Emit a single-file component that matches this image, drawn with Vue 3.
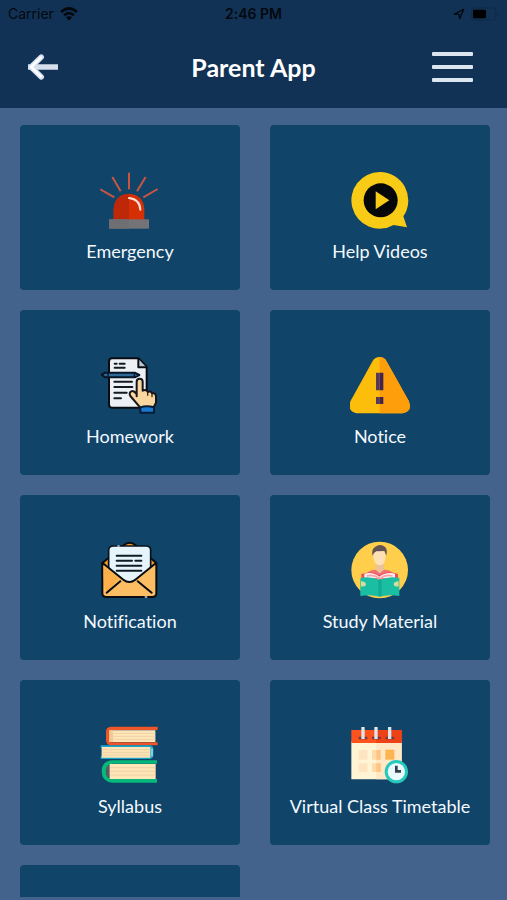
<script setup>
const tiles = [
  { id: 'emergency', label: 'Emergency' },
  { id: 'videos', label: 'Help Videos' },
  { id: 'homework', label: 'Homework' },
  { id: 'notice', label: 'Notice' },
  { id: 'notification', label: 'Notification' },
  { id: 'study', label: 'Study Material' },
  { id: 'syllabus', label: 'Syllabus' },
  { id: 'timetable', label: 'Virtual Class Timetable' }
]
</script>

<template>
  <div class="app">
    <header class="header">
      <div class="status">
        <div class="carrier">
          <span>Carrier</span>
          <svg class="wifi" viewBox="0 0 54 42" aria-hidden="true">
            <g fill="none" stroke="currentColor" stroke-width="8">
              <path d="M3 15Q27 -6 51 15" />
              <path d="M12 25Q27 12 42 25" />
            </g>
            <path d="M18 31Q27 24 36 31L27 41Z" fill="currentColor" />
          </svg>
        </div>
        <span class="time">2:46 PM</span>
        <div class="power">
          <svg class="location" viewBox="0 0 36 36" aria-hidden="true">
            <path d="M4 18L32 4L20 32L18 19Z" fill="none" stroke="currentColor" stroke-width="4" stroke-linejoin="round" />
          </svg>
          <svg class="battery" viewBox="0 0 84 42" aria-hidden="true">
            <rect x="2" y="3" width="72" height="36" rx="8" fill="none" stroke="#0c2b49" stroke-width="3" />
            <rect x="6" y="8" width="39" height="26" rx="4" fill="#000" />
            <path d="M78 14Q84 21 78 28Z" fill="#0c2b49" />
          </svg>
        </div>
      </div>
      <div class="bar">
        <button class="icon-button" type="button" aria-label="Back">
          <svg class="back" viewBox="0 0 90 78" aria-hidden="true">
            <path d="M6 39H87" fill="none" stroke="#d5dfed" stroke-width="17" stroke-linecap="square" />
            <path d="M40 9L9 39L40 69" fill="none" stroke="#d5e1f2" stroke-width="16" stroke-linecap="round" stroke-linejoin="round" />
            <path d="M38 11L10 39L38 67" fill="none" stroke="#fff" stroke-width="8" stroke-linecap="round" stroke-linejoin="round" />
          </svg>
        </button>
        <h1>Parent App</h1>
        <button class="icon-button menu-button" type="button" aria-label="Menu">
          <span class="menu"><i></i><i></i><i></i></span>
        </button>
      </div>
    </header>

    <main class="content">
      <div class="grid">
        <button v-for="tile in tiles" :key="tile.id" class="tile" type="button">
          <svg class="art" viewBox="60 30 180 180" aria-hidden="true">
            <g v-if="tile.id === 'emergency'">
              <path d="M61 88L103 112M97 51L122 94M147 38V88M197 51L171 94M233 87L190 112" fill="none" stroke="#c95540" stroke-width="6" />
              <path d="M101 180V148Q103 104 147 101Q191 104 193 148V180Z" fill="#d72f05" />
              <path d="M101 180V148Q103 104 147 101V180Z" fill="#bd2908" />
              <path d="M147 114Q180 118 181 149" fill="none" stroke="#ffe0d6" stroke-width="6" stroke-linecap="round" />
              <rect x="87" y="178" width="120" height="28" fill="#747377" />
              <rect x="87" y="178" width="60" height="28" fill="#6f6f73" />
            </g>

            <g v-else-if="tile.id === 'videos'">
              <path d="M149 36A85 85 0 1 0 191 195L231 202L220 169A85 85 0 0 0 149 36Z" fill="#f8cc16" />
              <circle cx="152" cy="121" r="51" fill="#050708" />
              <path d="M137 94L178 121L137 148Z" fill="#f8cc16" />
            </g>

            <g v-else-if="tile.id === 'homework'" stroke-linecap="round" stroke-linejoin="round">
              <path d="M96 40H176L200 66V188H95Q87 188 87 178V50Q87 40 96 40Z" fill="#edf0f5" stroke="#090d13" stroke-width="6" />
              <path d="M175 42V67H199" fill="#b7c6d4" stroke="#090d13" stroke-width="6" />
              <path d="M104 56H110M119 56H134M104 68H134M103 110H156M103 126H157M103 143H140M103 160H123" stroke="#151a21" stroke-width="6" fill="none" />
              <path d="M65 89L75 83H164L178 90L164 97H75Z" fill="#316998" stroke="#091426" stroke-width="6" />
              <path d="M84 84V96M163 84V96" stroke="#091426" stroke-width="4" />
              <path d="M170 154V110Q170 101 179 101Q188 101 188 110V137Q200 132 203 141Q213 136 216 145Q227 142 228 154V173L220 188H181L151 153Q146 143 154 139Q161 136 170 147" fill="#fbd7a0" stroke="#17151a" stroke-width="6" />
              <path d="M203 142V151M216 147V155" stroke="#3c2b24" stroke-width="4" />
              <path d="M181 187Q200 181 222 187V203H181Z" fill="#1979ce" stroke="#061b36" stroke-width="6" />
            </g>

            <g v-else-if="tile.id === 'notice'">
              <path d="M128 48Q135 36 149 36Q162 36 169 48L235 166Q250 197 218 205H79Q50 198 62 167Z" fill="#fdbd0b" />
              <path d="M149 36Q162 36 169 48L235 166Q250 197 218 205H149Z" fill="#ff9e0b" />
              <path d="M138 83H149V136H138ZM138 156H149V177H138Z" fill="#56385d" />
              <path d="M149 83H160V136H149ZM149 156H160V177H149Z" fill="#40244e" />
            </g>

            <g v-else-if="tile.id === 'notification'" stroke-linecap="round" stroke-linejoin="round">
              <path d="M68 98L132 45Q149 31 166 45L228 98V145H68Z" fill="#f0962b" stroke="#070c12" stroke-width="6" />
              <path d="M86 120V60Q87 48 100 48H199Q212 49 212 61V120L162 153Q148 161 134 153Z" fill="#e6f5fb" stroke="#07131c" stroke-width="5" />
              <path d="M67 98L130 149Q148 163 166 149L229 98V190Q229 201 217 201H79Q67 201 67 190Z" fill="#fdbd62" stroke="#090c10" stroke-width="6" />
              <path d="M71 107L117 145L82 187Q70 184 71 107Z" fill="#ffaf4a" />
              <path d="M80 188L121 154M215 188L173 154" stroke="#080c12" stroke-width="6" />
              <path d="M110 77H184M110 92H156M166 92H184M110 107H184M110 122H184" stroke="#111b23" stroke-width="6" />
              <path d="M114 48H117M196 201H200" stroke="#c5d9e4" stroke-width="5" />
            </g>

            <g v-else-if="tile.id === 'study'">
              <circle cx="149" cy="120" r="85" fill="#ffcf4b" />
              <path d="M101 148Q107 121 134 119H165Q193 121 199 148Z" fill="#f16f72" />
              <path d="M137 95H162V119L149 130L137 119Z" fill="#eec295" />
              <path d="M130 61H167V80Q166 104 149 106Q131 103 130 80Z" fill="#fde0b5" />
              <path d="M128 77Q123 57 136 50Q149 40 162 49Q174 54 169 77L163 63L139 64L132 69Z" fill="#625452" />
              <path d="M94 132Q126 121 149 136Q173 120 204 132V146H94Z" fill="#ed4c5c" />
              <path d="M103 131Q128 124 148 140Q169 124 195 131V145H103Z" fill="#fff0f0" />
              <path d="M110 138Q130 132 149 146Q168 132 188 138" fill="none" stroke="#f5a4a7" stroke-width="5" />
              <path d="M91 144Q122 138 149 150Q176 138 208 144V198Q175 192 149 200Q120 192 91 198Z" fill="#1abea3" />
              <path d="M145 148H155V199H145Z" fill="#15a994" />
              <path d="M93 154Q108 155 108 164Q104 172 93 169ZM206 154Q191 155 191 164Q195 172 206 169Z" fill="#d6dca0" />
            </g>

            <g v-else-if="tile.id === 'syllabus'">
              <path d="M233 35H93Q77 36 78 52V76Q78 91 95 91H233V82H94Q89 80 89 74V52Q90 45 97 45H233Z" fill="#ee562a" />
              <path d="M88 46H226V81H88Z" fill="#ffe6b7" />
              <path d="M88 46H99V81H88Z" fill="#f5c994" />
              <path d="M99 55H226M99 64H226M99 73H226" stroke="#ecd2a6" stroke-width="3" />
              <path d="M62 91H211Q220 93 220 103V122Q219 131 208 132H62V124H208V99H62Z" fill="#1ca6ca" />
              <path d="M65 96H211V128H65Z" fill="#ffe5b5" />
              <path d="M65 104H210M65 112H210M65 120H210" stroke="#ecd2a6" stroke-width="3" />
              <path d="M216 100V124" stroke="#dffaff" stroke-width="3" />
              <path d="M231 136H99Q65 137 65 169Q65 201 97 203H231V192H95Q77 188 78 169Q78 149 98 146H231Z" fill="#08b77a" />
              <path d="M79 157Q88 147 97 147V191Q84 190 79 178Z" fill="#625b5d" />
              <path d="M89 147H227V192H89Z" fill="#ffe6b7" />
              <path d="M91 158H226M91 169H226M91 180H226" stroke="#ecd2a6" stroke-width="3" />
            </g>

            <g v-else>
              <path d="M64 79H215V193H64Z" fill="#fff4d4" />
              <path d="M139 79H215V193H139Z" fill="#ffe8c5" />
              <path d="M64 45H215V84H64Z" fill="#ff521d" />
              <path d="M139 45H215V84H139Z" fill="#ed4216" />
              <path d="M86 65H112V73H86ZM126 65H152V73H126ZM167 65H193V73H167Z" fill="#723b3f" />
              <path d="M94 36H104V72H94ZM133 36H143V72H133ZM174 36H184V72H174Z" fill="#dbe5eb" />
              <path d="M86 105H112V134H86ZM86 145H112V171H86Z" fill="#ffe4c1" />
              <path d="M126 105H152V134H126ZM126 145H152V171H126Z" fill="#ffdbac" />
              <path d="M139 105H152V134H139ZM139 145H152V171H139Z" fill="#ffc47f" />
              <path d="M166 104H193V134H166Z" fill="#ffb452" />
              <circle cx="199" cy="170" r="35" fill="#28c9bd" />
              <circle cx="199" cy="170" r="26" fill="#e9fbff" />
              <path d="M199 152V169H213" fill="none" stroke="#34404f" stroke-width="8" />
            </g>
          </svg>
          <span class="label">{{ tile.label }}</span>
        </button>
        <div class="tile" aria-hidden="true"></div>
      </div>
    </main>
  </div>
</template>

<style>
body {
  background: #44638c;
}
</style>

<style scoped>
.app {
  display: flex;
  flex-direction: column;
  height: 100vh;
  box-sizing: border-box;
  padding-bottom: 3px;
  background: #44638c;
  font-family: Lato, "Open Sans", sans-serif;
  font-variant-ligatures: none;
}

.header {
  flex: none;
  background: #113255;
  color: #fff;
}

.status {
  display: grid;
  grid-template-columns: 1fr auto 1fr;
  align-items: center;
  height: 28px;
  padding: 0 8px;
  color: #03080f;
  font-family: Inter, "Liberation Sans", sans-serif;
  font-size: 14px;
  line-height: 20px;
}

.carrier,
.power {
  display: flex;
  align-items: center;
  gap: 6px;
}

.power {
  justify-content: flex-end;
}

.time {
  font-weight: 600;
}

.wifi {
  width: 18px;
  height: 14px;
}

.location {
  width: 12px;
  height: 12px;
}

.battery {
  width: 28px;
  height: 14px;
}

.bar {
  display: grid;
  grid-template-columns: 1fr auto 1fr;
  align-items: center;
  height: 78px;
  padding: 0 28px 2px;
}

h1 {
  margin: 0;
  font-size: 25px;
  font-weight: 700;
  line-height: 32px;
}

.icon-button {
  display: flex;
  justify-self: start;
  padding: 0;
  border: 0;
  background: none;
  cursor: pointer;
}

.menu-button {
  justify-self: end;
  padding-right: 6px;
}

.back {
  width: 30px;
  height: 26px;
}

.menu {
  display: flex;
  flex-direction: column;
  gap: 9px;
}

.menu i {
  width: 41px;
  height: 4px;
  border-radius: 1px;
  background: #dde5f0;
}

.content {
  flex: 1;
  min-height: 0;
  overflow: hidden;
}

.grid {
  display: grid;
  grid-template-columns: 1fr 1fr;
  grid-auto-rows: 165px;
  gap: 20px 30px;
  padding: 17px 17px 0 20px;
}

.tile {
  display: flex;
  flex-direction: column;
  align-items: center;
  gap: 9px;
  min-width: 0;
  padding: 45px 0 0;
  border: 0;
  border-radius: 4px;
  background: #104468;
  color: #f4f9ff;
  font-family: inherit;
  font-size: 18px;
  line-height: 24px;
  font-variant-ligatures: inherit;
}

.art {
  flex: none;
  width: 60px;
  height: 60px;
}

.label {
  white-space: nowrap;
}
</style>
